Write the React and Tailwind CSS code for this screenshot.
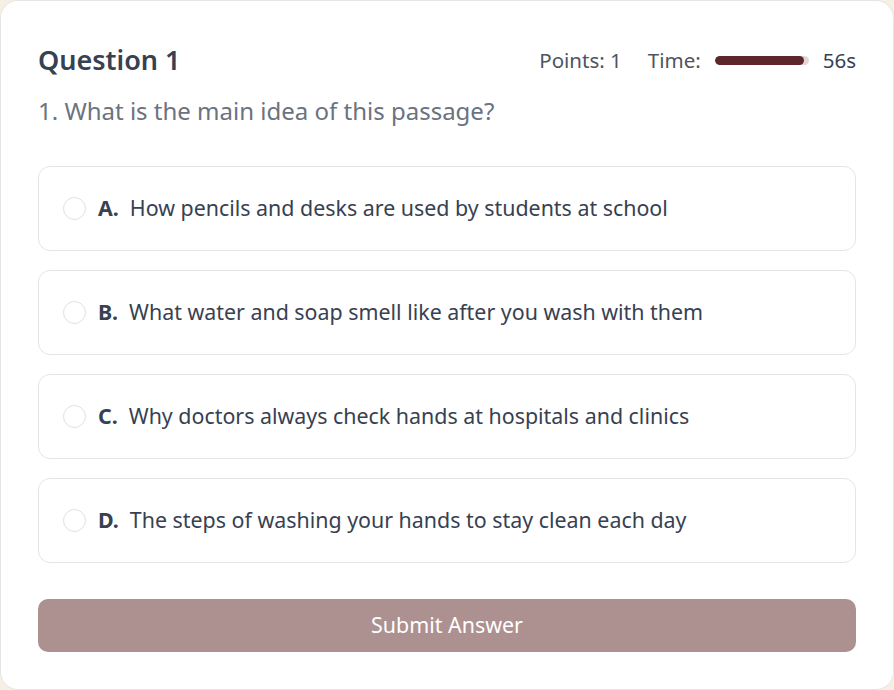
import React, { useState } from "react";

const options = [
  { key: "A", text: "How pencils and desks are used by students at school" },
  { key: "B", text: "What water and soap smell like after you wash with them" },
  { key: "C", text: "Why doctors always check hands at hospitals and clinics" },
  { key: "D", text: "The steps of washing your hands to stay clean each day" },
];

export default function App() {
  const [selected, setSelected] = useState(null);

  return (
    <div className="w-[894px] h-[690px] bg-[#f6efe4]" style={{ fontFamily: '"Noto Sans", "Open Sans", sans-serif' }}>
      <div className="w-[894px] h-[690px] bg-white border border-[#e5e5e5] rounded-[18px] px-[37px] pt-[41px]">
        <div className="flex items-center justify-between">
          <h2 className="text-[27px] leading-[36px] font-semibold text-[#374151]">Question 1</h2>
          <div className="flex items-center text-[20.5px] text-[#4b5563]">
            <span>Points: 1</span>
            <span className="ml-[26px]">Time:</span>
            <div className="ml-[14px] w-[94px] h-[9px] rounded-full bg-[#e3d6d6] overflow-hidden">
              <div className="h-full rounded-full bg-[#5c262b]" style={{ width: "95%" }} />
            </div>
            <span className="ml-[14px] text-[#374151]">56s</span>
          </div>
        </div>

        <p className="mt-[17px] text-[24px] leading-[32px] text-[#6b7280]">1. What is the main idea of this passage?</p>

        <div className="mt-[39px] flex flex-col gap-[19px]">
          {options.map((o) => (
            <button
              key={o.key}
              onClick={() => setSelected(o.key)}
              className="h-[85px] w-full flex items-center px-[24px] rounded-[12px] border border-[#e5e5e5] bg-white text-left"
            >
              <span className="w-[23px] h-[23px] rounded-full border border-[#e0e0e0] bg-white" />
              <span className="ml-[12px] text-[21.4px] font-bold text-[#374151]">{o.key}.</span>
              <span className="ml-[11px] text-[21.4px] text-[#374151]">{o.text}</span>
            </button>
          ))}
        </div>

        <button className="mt-[36px] w-full h-[53px] rounded-[10px] bg-[#ad9090] text-white text-[21.4px]">
          Submit Answer
        </button>
      </div>
    </div>
  );
}
